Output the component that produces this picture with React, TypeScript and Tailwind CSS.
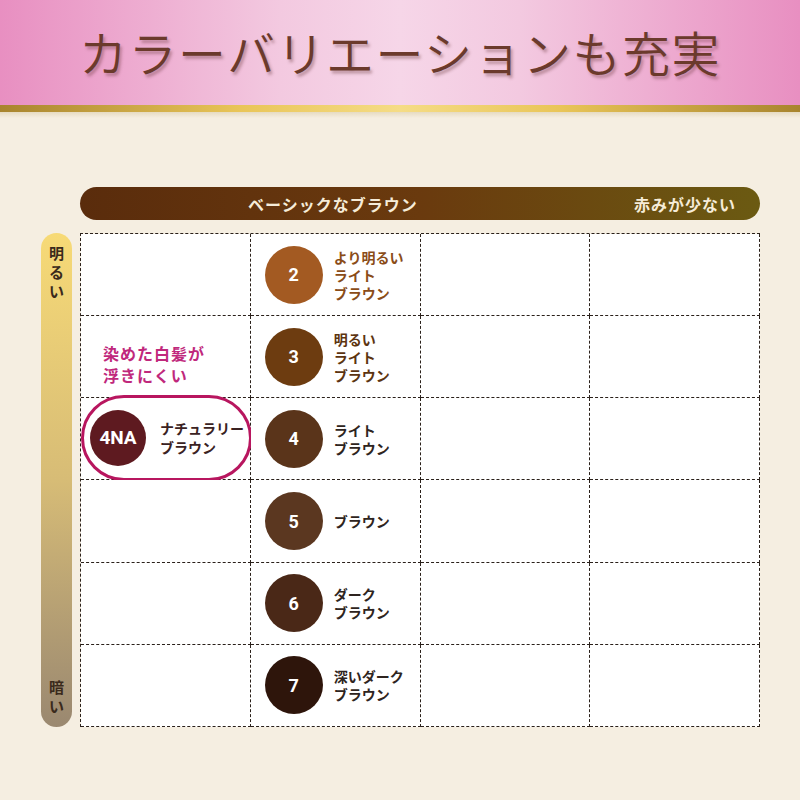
import React from "react";

const rows = [
  { n: "2", color: "#a35a22", text: ["より明るい", "ライト", "ブラウン"], tc: "#8a4c18" },
  { n: "3", color: "#6d3c10", text: ["明るい", "ライト", "ブラウン"], tc: "#5c3410" },
  { n: "4", color: "#5a341a", text: ["ライト", "ブラウン"], tc: "#2e2420" },
  { n: "5", color: "#5b3720", text: ["ブラウン"], tc: "#2e2420" },
  { n: "6", color: "#4a2817", text: ["ダーク", "ブラウン"], tc: "#2e2420" },
  { n: "7", color: "#2e150b", text: ["深いダーク", "ブラウン"], tc: "#2e2420" },
];

const font = { fontFamily: '"Noto Sans CJK JP", "Noto Sans", sans-serif' };

function Cell({ children, className = "" }: { children?: React.ReactNode; className?: string }) {
  return (
    <div className={"relative border-r border-b border-dashed border-[#2a201a] bg-white " + className}>
      {children}
    </div>
  );
}

export default function App() {
  return (
    <div className="w-[800px] h-[800px] bg-[#f5eee1] flex flex-col overflow-hidden" style={font}>
      <header className="h-[105px] bg-[linear-gradient(90deg,#e88fc1,#f3c9e0_35%,#f6d6e8_50%,#f3c9e0_65%,#e88fc1)] flex items-center justify-center">
        <h1
          className="text-[48px] leading-none text-[#6b3a2c] tracking-[1.5px] -mt-[4px] [text-shadow:2px_3px_3px_rgba(90,40,40,0.35)]"
          style={{ fontFamily: '"Noto Sans CJK JP", serif', fontWeight: 350 }}
        >
          カラーバリエーションも充実
        </h1>
      </header>
      <div className="h-[7px] bg-[linear-gradient(90deg,#a8842e,#e9c558_30%,#f5dc86_50%,#e9c558_70%,#a8842e)]" />
      <div className="h-[6px] bg-gradient-to-b from-[#e6dbc2] to-[#f5eee1]" />

      <div className="mt-[69px] pl-[80px] pr-[40px]">
        <div className="h-[33px] rounded-full bg-[linear-gradient(90deg,#5a2c0c,#6a3a0e_50%,#6b5a12)] flex items-center text-[#f6ecd8] text-[16px] font-bold tracking-[1px]">
          <span className="ml-[168px]">ベーシックなブラウン</span>
          <span className="ml-auto mr-[24px]">赤みが少ない</span>
        </div>
      </div>

      <div className="mt-[13px] flex pl-[41px]">
        <div className="w-[31px] h-[494px] rounded-full bg-gradient-to-b from-[#f7da76] via-[#d7bc76] to-[#9a8870] flex flex-col items-center justify-between pt-[10px] pb-[12px] text-[#3a2a1c] text-[15px] font-bold leading-[19px]">
          <div className="flex flex-col items-center">
            <span>明</span>
            <span>る</span>
            <span>い</span>
          </div>
          <div className="flex flex-col items-center">
            <span>暗</span>
            <span>い</span>
          </div>
        </div>

        <div className="ml-[8px] w-[680px] h-[494px] grid grid-cols-4 grid-rows-6 border-t border-l border-dashed border-[#2a201a]">
          {rows.map((r, i) => (
            <React.Fragment key={r.n}>
              <Cell>
                {i === 1 && (
                  <div className="absolute left-[22px] top-[26px] text-[#c0287c] text-[16px] font-bold leading-[22px] tracking-[1px]">
                    <div>染めた白髪が</div>
                    <div>浮きにくい</div>
                  </div>
                )}
                {i === 2 && (
                  <div className="absolute left-0 right-[-2px] top-[-3px] bottom-[-2px] rounded-full border-[3px] border-[#b8165f] flex items-center pl-[6px] bg-white">
                    <div className="w-[56px] h-[56px] rounded-full bg-[#5e1a20] flex items-center justify-center text-white text-[19px] font-bold" style={{ fontFamily: "Roboto, sans-serif" }}>
                      4NA
                    </div>
                    <div className="ml-[14px] text-[14px] font-bold leading-[19px] text-[#3a2222]">
                      <div>ナチュラリー</div>
                      <div>ブラウン</div>
                    </div>
                  </div>
                )}
              </Cell>
              <Cell className="flex items-center pl-[14px]">
                <div
                  className="w-[58px] h-[58px] rounded-full flex items-center justify-center text-white text-[18px] font-bold shrink-0"
                  style={{ backgroundColor: r.color, fontFamily: "Roboto, sans-serif" }}
                >
                  {r.n}
                </div>
                <div className="ml-[11px] text-[14px] font-bold leading-[18px]" style={{ color: r.tc }}>
                  {r.text.map((t) => (
                    <div key={t}>{t}</div>
                  ))}
                </div>
              </Cell>
              <Cell />
              <Cell />
            </React.Fragment>
          ))}
        </div>
      </div>
    </div>
  );
}
